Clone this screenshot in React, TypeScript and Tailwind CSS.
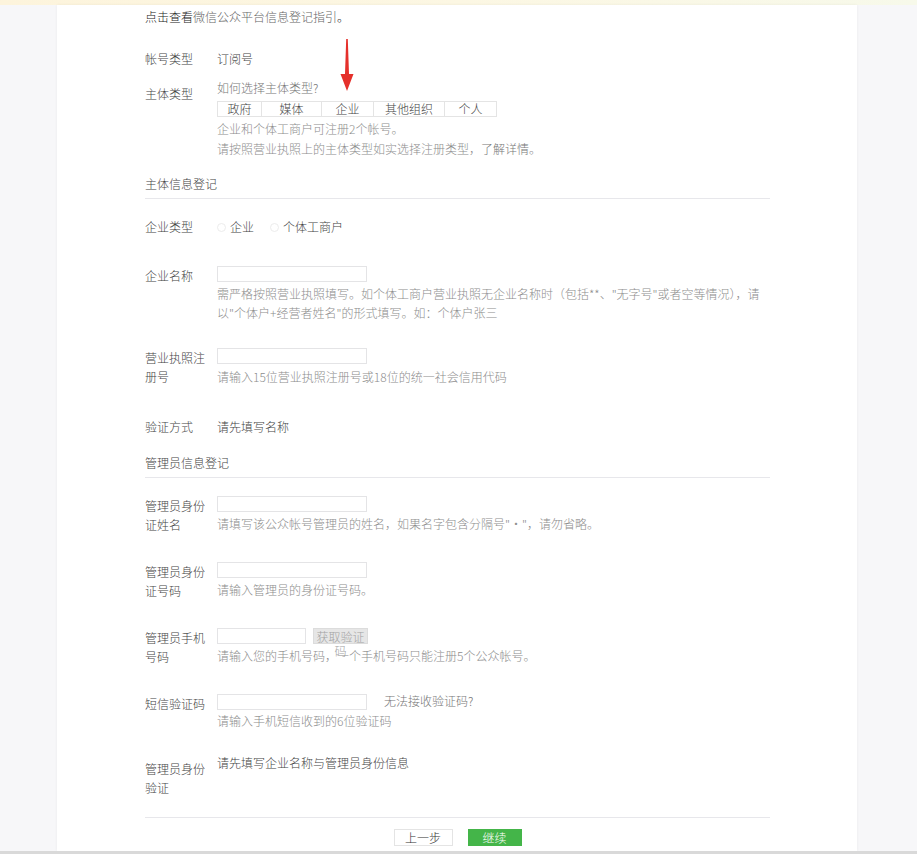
import React from 'react';

const font = { fontFamily: '"Noto Sans CJK SC", "Noto Sans", sans-serif' };

function Label({ children, offset = false }: { children: React.ReactNode; offset?: boolean }) {
  return (
    <div className={`w-[64px] mr-[8px] shrink-0 text-[#444] font-light leading-[19px] ${offset ? 'pt-[6px]' : ''}`}>
      {children}
    </div>
  );
}

function Input({ w = 'w-[150px]' }: { w?: string }) {
  return <div className={`${w} h-[16px] border border-[#e4e4e6] bg-white`} />;
}

function Help({ children }: { children: React.ReactNode }) {
  return <div className="text-[#8d8d8d] font-light leading-[19px] whitespace-nowrap">{children}</div>;
}

function Section({ title }: { title: string }) {
  return (
    <div className="border-b border-[#e7e7eb] pb-[4px] leading-[20px] text-[#444] font-light">{title}</div>
  );
}

function Arrow() {
  return (
    <svg className="absolute left-[339px] top-[39px]" width="16" height="54" viewBox="0 0 16 54">
      <path d="M7.2 0 L8.8 0 L10 35 L14.5 35 L8 52 L1.5 35 L6 35 Z" fill="#e5302b" />
    </svg>
  );
}

export default function App() {
  const segs = [
    { t: '政府', w: 'w-[45px]' },
    { t: '媒体', w: 'w-[60px]' },
    { t: '企业', w: 'w-[52px]' },
    { t: '其他组织', w: 'w-[71px]' },
    { t: '个人', w: 'w-[52px]' },
  ];

  return (
    <div className="relative w-[917px] h-[854px] overflow-hidden bg-[#f7f7f9] text-[12px]" style={font}>
      <div className="h-[5px] bg-gradient-to-r from-[#fdf4dc] via-[#fcf7e3] to-[#f7f9ea]" />
      <div className="w-[800px] h-[846px] ml-[57px] bg-white shadow-[0_0_3px_rgba(0,0,0,0.06)] pl-[88px] pr-[87px]">
        {/* intro */}
        <div className="pt-[2px] leading-[20px] text-[#222] font-light">
          点击查看<span className="text-[#666]">微信公众平台信息登记指引</span>。
        </div>

        <div className="flex mt-[22px] leading-[20px]">
          <Label>帐号类型</Label>
          <div className="text-[#444] font-light leading-[20px]">订阅号</div>
        </div>

        <div className="flex mt-[9px]">
          <Label offset>主体类型</Label>
          <div>
            <div className="leading-[20px] text-[#777] font-light">如何选择主体类型?</div>
            <div className="flex mt-[3px] h-[16px]">
              {segs.map((s, i) => (
                <div
                  key={s.t}
                  className={`${s.w} h-[16px] flex items-center justify-center border border-[#e4e4e4] text-[#444] font-light leading-[14px] ${i > 0 ? 'border-l-0' : ''}`}
                >
                  {s.t}
                </div>
              ))}
            </div>
            <div className="mt-[2px] text-[#8d8d8d] font-light leading-[20px]">企业和个体工商户可注册2个帐号。</div>
            <div className="text-[#8d8d8d] font-light leading-[20px]">
              请按照营业执照上的主体类型如实选择注册类型，<span className="text-[#777]">了解详情</span>。
            </div>
          </div>
        </div>

        <div className="mt-[15px]">
          <Section title="主体信息登记" />
        </div>

        <div className="flex mt-[18px] leading-[20px]">
          <Label>企业类型</Label>
          <div className="flex items-center text-[#444] font-light">
            <span className="w-[9px] h-[9px] rounded-full border border-[#ececec] mr-[4px]" />
            <span>企业</span>
            <span className="w-[9px] h-[9px] rounded-full border border-[#ececec] ml-[16px] mr-[4px]" />
            <span>个体工商户</span>
          </div>
        </div>

        <div className="flex mt-[29px]">
          <Label>企业名称</Label>
          <div>
            <Input />
            <div className="mt-[2px]">
              <Help>需严格按照营业执照填写。如个体工商户营业执照无企业名称时（包括**、"无字号"或者空等情况），请</Help>
              <Help>以"个体户+经营者姓名"的形式填写。如：个体户张三</Help>
            </div>
          </div>
        </div>

        <div className="flex mt-[26px]">
          <Label>营业执照注册号</Label>
          <div>
            <Input />
            <div className="mt-[3px]">
              <Help>请输入15位营业执照注册号或18位的统一社会信用代码</Help>
            </div>
          </div>
        </div>

        <div className="flex mt-[31px] leading-[20px]">
          <Label>验证方式</Label>
          <div className="text-[#444] font-light leading-[20px]">请先填写名称</div>
        </div>

        <div className="mt-[16px]">
          <Section title="管理员信息登记" />
        </div>

        <div className="flex mt-[18px] h-[66px]">
          <Label>管理员身份证姓名</Label>
          <div>
            <Input />
            <div className="mt-[2px]">
              <Help>请填写该公众帐号管理员的姓名，如果名字包含分隔号"·"，请勿省略。</Help>
            </div>
          </div>
        </div>

        <div className="flex h-[66px]">
          <Label>管理员身份证号码</Label>
          <div>
            <Input />
            <div className="mt-[2px]">
              <Help>请输入管理员的身份证号码。</Help>
            </div>
          </div>
        </div>

        <div className="flex h-[66px]">
          <Label>管理员手机号码</Label>
          <div>
            <div className="flex h-[16px]">
              <Input w="w-[89px]" />
              <div className="ml-[7px] w-[55px] h-[16px] bg-[#e6e6e6] text-[#a3a3a3] font-light text-center leading-[14px] pt-[1px] border border-[#dcdcdc]">
                获取验证码
              </div>
            </div>
            <div className="mt-[2px]">
              <Help>请输入您的手机号码，一个手机号码只能注册5个公众帐号。</Help>
            </div>
          </div>
        </div>

        <div className="flex h-[59px]">
          <Label>短信验证码</Label>
          <div>
            <div className="flex h-[16px] items-start">
              <Input />
              <div className="ml-[17px] -mt-[2px] leading-[18px] text-[#777] font-light">无法接收验证码?</div>
            </div>
            <div className="mt-[1px]">
              <Help>请输入手机短信收到的6位验证码</Help>
            </div>
          </div>
        </div>

        <div className="flex h-[55px]">
          <Label offset>管理员身份验证</Label>
          <div className="text-[#444] font-light leading-[20px]">请先填写企业名称与管理员身份信息</div>
        </div>

        <div className="border-t border-[#e7e7eb] mt-[9px]" />

        <div className="flex justify-center gap-[15px] mt-[11px]">
          <div className="w-[59px] h-[17px] border border-[#e4e4e4] bg-white text-[#333] font-light flex items-center justify-center leading-[15px]">
            上一步
          </div>
          <div className="w-[54px] h-[17px] bg-[#44b549] text-white font-light flex items-center justify-center leading-[15px]">
            继续
          </div>
        </div>
      </div>
      <div className="h-[3px] bg-[#d9d9d9]" />
      <Arrow />
    </div>
  );
}
